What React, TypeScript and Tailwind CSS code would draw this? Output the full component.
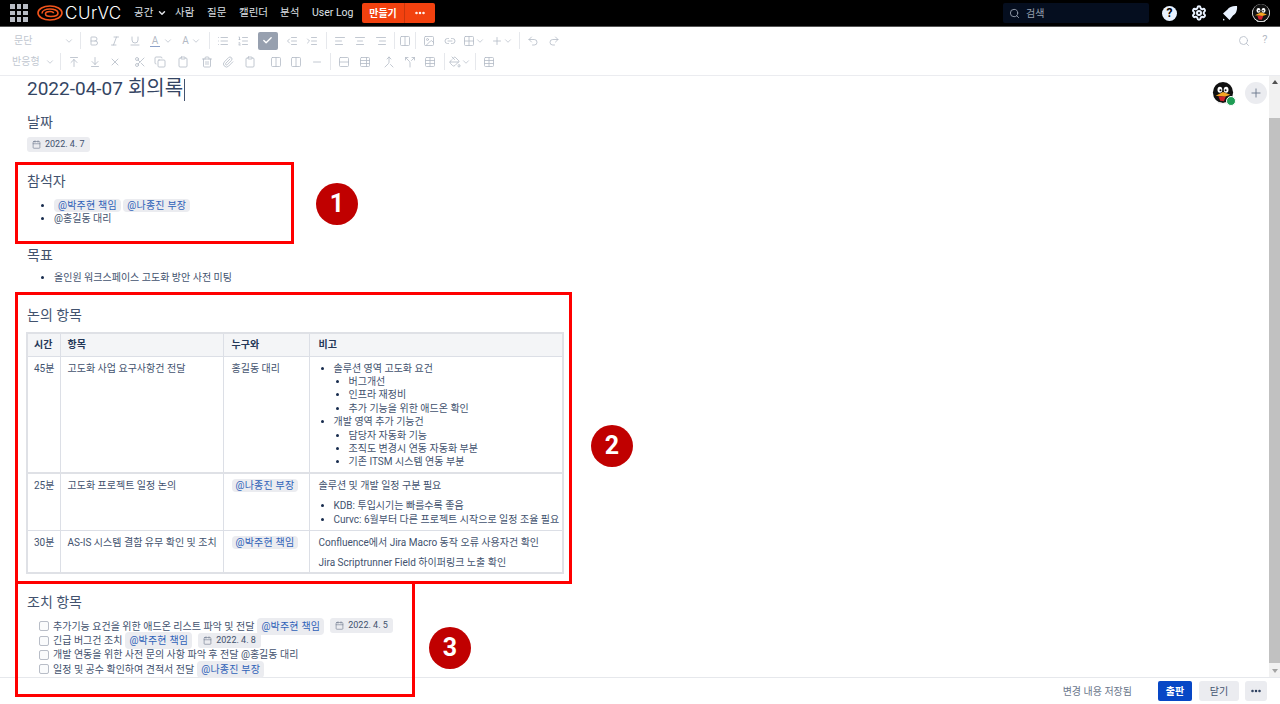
import type { ReactNode } from 'react';
import {
  AlignCenter, AlignLeft, AlignRight, Bold, Check, ChevronDown, Columns2, Copy, Ellipsis, Grid2x2,
  Image, IndentDecrease, IndentIncrease, Italic, Link2, List, ListOrdered, PaintBucket,
  Paperclip, Plus, Redo2, Rows2, Scissors, Search, Settings, Table, TableProperties, Trash2, Underline, Undo2, Calendar,
  Merge, Split, Minus, Clipboard, ArrowUpToLine, ArrowDownToLine, X,
} from 'lucide-react';

const Penguin = ({ size }: { size: number }) => (
  <svg width={size} height={size} viewBox="0 0 24 24">
    <circle cx="12" cy="12" r="12" fill="#fff" />
    <ellipse cx="12" cy="11.5" rx="11" ry="11.5" fill="#111" />
    <ellipse cx="8.6" cy="8.5" rx="2.6" ry="3.2" fill="#fff" />
    <ellipse cx="15.4" cy="8.5" rx="2.6" ry="3.2" fill="#fff" />
    <circle cx="9.2" cy="9" r="1.1" fill="#111" />
    <circle cx="14.8" cy="9" r="1.1" fill="#111" />
    <path d="M4 15 L12 11 L20 14 L14 16 Z" fill="#f5a623" />
    <path d="M7 15.500 L15 16 L13 21 L9 20.500 Z" fill="#d0202a" />
    <path d="M5 21 Q12 25 19 21 L17 23.500 L7 23.500 Z" fill="#e8e8e8" />
  </svg>
);

const Tool = ({ children, w = 'w-[20.5px]' }: { children: ReactNode; w?: string }) => (
  <span className={`flex h-5 shrink-0 items-center justify-center text-[#b3bac5] ${w}`}>{children}</span>
);

const Sep = () => <span className="mx-[3px] h-[17px] w-px shrink-0 bg-[#e6e8ec]" />;

const Caret = () => <ChevronDown size={10} strokeWidth={2} className="text-[#c1c7d0]" />;

const I = { size: 12, strokeWidth: 1.6 };

const Mention = ({ children }: { children: ReactNode }) => (
  <span className="rounded-[4px] bg-[#ebecf0] px-[4px] py-px tracking-[0.2px] text-[#2f62b8]">{children}</span>
);

const DateChip = ({ children }: { children: ReactNode }) => (
  <span className="inline-flex items-center gap-[4px] rounded-[3px] bg-[#ebecf0] px-[5px] py-px text-[9px] leading-[13px] text-[#42526e]">
    <Calendar size={9} strokeWidth={1.6} className="text-[#6b778c]" />
    {children}
  </span>
);

const Heading = ({ children, className = '' }: { children: ReactNode; className?: string }) => (
  <h2 className={`text-[14px] leading-5 text-[#42526e] ${className}`}>{children}</h2>
);

const Task = ({ children }: { children: ReactNode }) => (
  <li className="flex h-[14.4px] items-center gap-[4px] whitespace-nowrap">
    <span className="h-[10px] w-[10px] shrink-0 rounded-[2px] border border-[#b8bdc7] bg-[#fafbfc]" />
    <span className="flex items-center gap-[3px]">{children}</span>
  </li>
);

const Marker = ({ children, className }: { children: ReactNode; className: string }) => (
  <div className={`absolute flex h-[42px] w-[42px] items-center justify-center rounded-full bg-[#c00000] text-[25px] font-bold text-white ${className}`}>
    {children}
  </div>
);

const cell = 'border border-[#dcdfe6] px-[8px] pt-[5px] whitespace-nowrap';
const head = 'border border-[#dcdfe6] px-[8px] whitespace-nowrap';
const timeCell = 'border border-[#dcdfe6] px-[6px] pt-[5px] whitespace-nowrap';
const titleCell = 'border border-[#dcdfe6] px-[7px] pt-[5px] whitespace-nowrap';
const noteCell = 'border border-[#dcdfe6] px-[9px] pt-[5px] whitespace-nowrap';

export default function App() {
  return (
    <div
      className="relative flex h-[704px] w-[1280px] flex-col overflow-hidden bg-white text-[10px] text-[#42526e]"
      style={{ fontFamily: 'Roboto, "Noto Sans CJK KR", sans-serif' }}
    >
      {/* top nav */}
      <header className="flex h-[27px] shrink-0 items-center border-b border-[#555] bg-black pl-[10px] text-[#dfe1e6]">
        <div className="grid w-[18px] grid-cols-3 gap-[2px]">
          {Array.from({ length: 9 }).map((_, i) => (
            <span key={i} className="h-[4.6px] bg-[#b8bcc4]" />
          ))}
        </div>
        <svg width="26" height="16" viewBox="0 0 26 16" className="ml-[9px]" fill="none" stroke="#f2541b" strokeWidth="1.6">
          <ellipse cx="13" cy="8" rx="12" ry="7" />
          <path d="M5 8.500c0-3 4-4.500 8-4.500s8 1.500 8 4-3.500 3.500-7 3.500-5.500-1-5.500-2.500 2-2.500 4.500-2.500 3.500.8 3.500 1.800" />
        </svg>
        <span className="ml-[2px] w-[69px] text-[17px] font-light leading-none tracking-[0.5px] text-white" style={{ fontFamily: 'Inter, sans-serif' }}>CUrVC</span>
        <nav className="flex items-center text-[10.5px]">
          <span className="flex w-[41px] items-center">공간<ChevronDown size={10} strokeWidth={3.5} className="ml-[4px]" /></span>
          <span className="w-[32px]">사람</span>
          <span className="w-[32px]">질문</span>
          <span className="w-[41px]">캘린더</span>
          <span className="w-[32px]">분석</span>
          <span className="w-[50px]">User Log</span>
        </nav>
        <div className="flex h-5 overflow-hidden rounded-[2px] bg-[#f2410f] font-bold text-white">
          <span className="flex w-[43px] items-center justify-center border-r border-[#c9360c]">만들기</span>
          <span className="flex w-[30px] items-center justify-center"><Ellipsis size={12} strokeWidth={3} /></span>
        </div>
        <div className="ml-auto flex h-5 w-[146px] items-center gap-[6px] rounded-[2px] bg-[#050e1f] pl-[6px] text-[#97a0af]">
          <Search size={11} strokeWidth={2} />
          <span>검색</span>
        </div>
        <div className="flex w-[131px] items-center justify-between pl-[13px] pr-[10px]">
          <span className="flex h-[15px] w-[15px] items-center justify-center rounded-full bg-[#e9f2ff] text-[12px] font-bold leading-none text-black">?</span>
          <Settings size={16} strokeWidth={3} className="text-[#e9f2ff]" />
          <svg width="16" height="16" viewBox="0 0 16 16" fill="#e9f2ff">
            <path d="M15 1c-4-.5-8 1-9.500 3.500L1 8.500l6.500 6.500 3.500-4.500C14 9 15.500 5 15 1zM1 13.500l2 1.500-2 .5z" />
          </svg>
          <Penguin size={18} />
        </div>
      </header>

      {/* editor toolbar */}
      <div className="flex h-[49px] shrink-0 flex-col justify-center gap-px border-b border-[#ebecf0] pl-[12px] pr-[5px] text-[#c1c7d0]">
        <div className="flex items-center">
          <span className="flex w-[65px] items-center justify-between pl-[2px] pr-[3px]">문단 <Caret /></span>
          <Sep />
          <Tool><Bold {...I} /></Tool>
          <Tool><Italic {...I} /></Tool>
          <Tool><Underline {...I} /></Tool>
          <Tool w="w-[32px]"><span className="mr-[3px] border-b border-[#8aa0c8] px-[2px] leading-[11px]">A</span><Caret /></Tool>
          <Tool w="w-[28px]"><span className="mr-[2px] leading-[11px]">A</span><Caret /></Tool>
          <Sep />
          <Tool><List {...I} /></Tool>
          <Tool><ListOrdered {...I} /></Tool>
          <span className="ml-[4px] mr-[4px] flex h-[18px] w-[20px] shrink-0 items-center justify-center rounded-[2px] bg-[#97a0af] text-white"><Check size={11} strokeWidth={3} /></span>
          <Tool><IndentDecrease {...I} /></Tool>
          <Tool><IndentIncrease {...I} /></Tool>
          <Sep />
          <Tool><AlignLeft {...I} /></Tool>
          <Tool><AlignCenter {...I} /></Tool>
          <Tool><AlignRight {...I} /></Tool>
          <Sep />
          <Tool w="w-[14px]"><Columns2 {...I} /></Tool>
          <Sep />
          <Tool><Image {...I} /></Tool>
          <Tool><Link2 {...I} /></Tool>
          <Tool w="w-[28px]"><Grid2x2 {...I} /><Caret /></Tool>
          <Tool w="w-[28px]"><Plus {...I} /><Caret /></Tool>
          <Sep />
          <Tool><Undo2 {...I} /></Tool>
          <Tool><Redo2 {...I} /></Tool>
          <span className="ml-auto flex items-center text-[#b3bac5]">
            <Tool><Search {...I} /></Tool>
            <Tool><span className="text-[11px]">?</span></Tool>
          </span>
        </div>
        <div className="flex items-center">
          <span className="flex w-[45px] items-center justify-between pr-[2px]">반응형 <Caret /></span>
          <Sep />
          <Tool><ArrowUpToLine {...I} /></Tool>
          <Tool><ArrowDownToLine {...I} /></Tool>
          <Tool><X {...I} /></Tool>
          <span className="w-[4px]" />
          <Tool><Scissors {...I} /></Tool>
          <Tool><Copy {...I} /></Tool>
          <span className="w-[2px]" />
          <Tool><Clipboard {...I} /></Tool>
          <span className="w-[4px]" />
          <Tool><Trash2 {...I} /></Tool>
          <Tool><Paperclip {...I} /></Tool>
          <span className="w-[2px]" />
          <Tool><Clipboard {...I} /></Tool>
          <span className="w-[5px]" />
          <Tool><Columns2 {...I} /></Tool>
          <Tool><Columns2 {...I} /></Tool>
          <Tool><Minus {...I} /></Tool>
          <Sep />
          <Tool><Rows2 {...I} /></Tool>
          <Tool><TableProperties {...I} /></Tool>
          <span className="w-[4px]" />
          <Tool><Merge {...I} /></Tool>
          <Tool><Split {...I} /></Tool>
          <Tool><Table {...I} /></Tool>
          <Sep />
          <Tool w="w-[24px]"><PaintBucket {...I} /><Caret /></Tool>
          <Sep />
          <Tool><Table {...I} /></Tool>
        </div>
      </div>

      {/* page body */}
      <div className="relative flex min-h-0 flex-1">
        <main className="relative min-w-0 flex-1 pl-[27px]">
          <h1 className="text-[20px] leading-[24px] text-[#344563]">
            <span className="text-[19px]">2022-04-07</span> 회의록<span className="ml-px inline-block h-[22px] w-px bg-[#42526e] align-middle" />
          </h1>

          <Heading className="mt-[11px]">날짜</Heading>
          <div className="mt-[5px] h-[15px]"><DateChip>2022. 4. 7</DateChip></div>

          <Heading className="mt-[19px]">참석자</Heading>
          <ul className="mt-[8px] list-disc pl-[27px] leading-[13px] marker:text-[#172b4d]">
            <li><Mention>@박주현 책임</Mention> <Mention>@나종진 부장</Mention></li>
            <li>@홍길동 대리</li>
          </ul>

          <Heading className="mt-[20px]">목표</Heading>
          <ul className="mt-[6px] list-disc pl-[27px] leading-[14px] marker:text-[#172b4d]">
            <li>올인원 워크스페이스 고도화 방안 사전 미팅</li>
          </ul>

          <Heading className="mt-[20px]">논의 항목</Heading>
          <table className="-ml-px mt-[7px] w-[538px] table-fixed border-collapse border-2 border-[#dfe1e6]">
            <colgroup>
              <col className="w-[33px]" />
              <col className="w-[163px]" />
              <col className="w-[86px]" />
              <col />
            </colgroup>
            <thead>
              <tr className="h-[23px] bg-[#f4f5f7] text-left font-bold text-[#253858]">
                <th className="border border-[#dcdfe6] px-[6px] whitespace-nowrap">시간</th>
                <th className="border border-[#dcdfe6] px-[7px] whitespace-nowrap">항목</th>
                <th className={head}>누구와</th>
                <th className="border border-[#dcdfe6] px-[9px] whitespace-nowrap">비고</th>
              </tr>
            </thead>
            <tbody className="align-top leading-[13.4px]">
              <tr className="h-[117px] border-b-2 border-[#dfe1e6]">
                <td className={timeCell}>45분</td>
                <td className={titleCell}>고도화 사업 요구사항건 전달</td>
                <td className={cell}>홍길동 대리</td>
                <td className={noteCell}>
                  <ul className="list-disc pl-[15px] marker:text-[#172b4d]">
                    <li>솔루션 영역 고도화 요건
                      <ul className="list-disc pl-[15px]">
                        <li>버그개선</li>
                        <li>인프라 재정비</li>
                        <li>추가 기능을 위한 애드온 확인</li>
                      </ul>
                    </li>
                    <li>개발 영역 추가 기능건
                      <ul className="list-disc pl-[15px]">
                        <li>담당자 자동화 기능</li>
                        <li>조직도 변경시 연동 자동화 부분</li>
                        <li>기존 ITSM 시스템 연동 부분</li>
                      </ul>
                    </li>
                  </ul>
                </td>
              </tr>
              <tr className="h-[57px]">
                <td className={timeCell}>25분</td>
                <td className={titleCell}>고도화 프로젝트 일정 논의</td>
                <td className={cell}><Mention>@나종진 부장</Mention></td>
                <td className={noteCell}>
                  <p>솔루션 및 개발 일정 구분 필요</p>
                  <ul className="mt-[7px] list-disc pl-[15px] marker:text-[#172b4d]">
                    <li>KDB: 투입시기는 빠를수록 좋음</li>
                    <li>Curvc: 6월부터 다른 프로젝트 시작으로 일정 조율 필요</li>
                  </ul>
                </td>
              </tr>
              <tr className="h-[43px]">
                <td className={timeCell}>30분</td>
                <td className={titleCell}>AS-IS 시스템 결함 유무 확인 및 조치</td>
                <td className={cell}><Mention>@박주현 책임</Mention></td>
                <td className={noteCell}>
                  <p>Confluence에서 Jira Macro 동작 오류 사용자건 확인</p>
                  <p className="mt-[7px]">Jira Scriptrunner Field 하이퍼링크 노출 확인</p>
                </td>
              </tr>
            </tbody>
          </table>

          <Heading className="mt-[18px]">조치 항목</Heading>
          <ul className="mt-[7px] pl-[12px]">
            <Task>추가기능 요건을 위한 애드온 리스트 파악 및 전달 <Mention>@박주현 책임</Mention> <span className="ml-[3px]"><DateChip>2022. 4. 5</DateChip></span></Task>
            <Task>긴급 버그건 조치 <Mention>@박주현 책임</Mention> <span className="ml-[3px]"><DateChip>2022. 4. 8</DateChip></span></Task>
            <Task>개발 연동을 위한 사전 문의 사항 파악 후 전달 @홍길동 대리</Task>
            <Task>일정 및 공수 확인하여 견적서 전달 <Mention>@나종진 부장</Mention></Task>
          </ul>

          <div className="absolute right-[2px] top-[6px] flex items-center gap-[11px]">
            <div className="relative">
              <Penguin size={22} />
              <span className="absolute -bottom-[2px] -right-[2px] h-[10px] w-[10px] rounded-full border border-white bg-[#1f9d55]" />
            </div>
            <span className="flex h-[22px] w-[22px] items-center justify-center rounded-full bg-[#ebecf0] text-[#6b778c]"><Plus size={14} strokeWidth={1.6} /></span>
          </div>
        </main>

        {/* scrollbar */}
        <div className="flex w-[11px] shrink-0 flex-col items-center bg-[#f1f1f1] py-[4px]">
          <span className="h-0 w-0 border-x-[3px] border-b-[4px] border-x-transparent border-b-[#505050]" />
          <span className="mb-[6px] mt-[34px] w-full flex-1 bg-[#c1c1c1]" />
          <span className="h-0 w-0 border-x-[3px] border-t-[4px] border-x-transparent border-t-[#a3a3a3]" />
        </div>
      </div>

      {/* footer */}
      <footer className="flex h-[27px] shrink-0 items-center justify-end border-t border-[#e6e8ec] bg-white pr-[13px] text-[#6b778c]">
        <span className="mr-[26px]">변경 내용 저장됨</span>
        <span className="flex h-5 w-[34px] items-center justify-center rounded-[2px] bg-[#0747c6] font-bold text-white">출판</span>
        <span className="ml-[7px] flex h-5 w-[40px] items-center justify-center rounded-[3px] bg-[#ebecf0] text-[#42526e]">닫기</span>
        <span className="ml-[6px] flex h-5 w-[22px] items-center justify-center rounded-[3px] bg-[#ebecf0] text-[#253858]"><Ellipsis size={12} strokeWidth={3} /></span>
      </footer>

      {/* annotations drawn over the screenshot */}
      <div className="absolute left-[15px] top-[162px] h-[82px] w-[279px] border-[3px] border-[#ff0000]" />
      <div className="absolute left-[15px] top-[292px] h-[292px] w-[557px] border-[3px] border-[#ff0000]" />
      <div className="absolute left-[15px] top-[582px] h-[115px] w-[400px] border-[3px] border-t-0 border-[#ff0000]" />
      <Marker className="left-[316px] top-[183px]">1</Marker>
      <Marker className="left-[591px] top-[425px]">2</Marker>
      <Marker className="left-[429px] top-[627px]">3</Marker>
    </div>
  );
}
